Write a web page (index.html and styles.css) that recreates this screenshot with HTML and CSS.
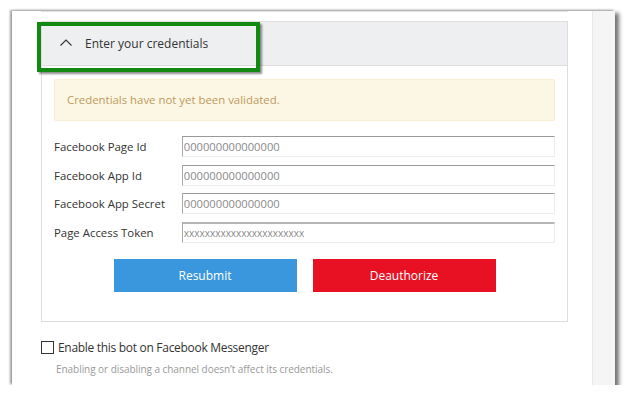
FILE: index.html
```html
<!DOCTYPE html>
<html lang="en">
<head>
  <meta charset="UTF-8" />
  <title>Facebook Messenger channel</title>
  <link rel="stylesheet" href="styles.css">
</head>
<body>

  <div class="shot">
    <div class="main">
      <div class="prev-card"></div>

      <div class="card">
        <div class="card-head">
          <svg class="chevron" width="12" height="7" viewBox="0 0 12 7">
            <path d="M0.5 6.5 L6 1 L11.5 6.5" fill="none" stroke="#333" stroke-width="1.1" />
          </svg>
          <span>Enter your credentials</span>
          <div class="highlight"></div>
        </div>

        <div class="card-body">
          <div class="alert">Credentials have not yet been validated.</div>

          <div class="form">
            <div class="row">
              <label for="pageId">Facebook Page Id</label>
              <input type="text" id="pageId" placeholder="000000000000000">
            </div>
            <div class="row">
              <label for="appId">Facebook App Id</label>
              <input type="text" id="appId" placeholder="000000000000000">
            </div>
            <div class="row">
              <label for="appSecret">Facebook App Secret</label>
              <input type="text" id="appSecret" placeholder="000000000000000">
            </div>
            <div class="row">
              <label for="token">Page Access Token</label>
              <input type="text" id="token" class="token" placeholder="xxxxxxxxxxxxxxxxxxxxxxx">
            </div>
          </div>

          <div class="buttons">
            <button class="btn blue">Resubmit</button>
            <button class="btn red">Deauthorize</button>
          </div>
        </div>
      </div>

      <label class="enable">
        <span class="box"></span>
        Enable this bot on Facebook Messenger
      </label>
      <p class="hint">Enabling or disabling a channel doesn’t affect its credentials.</p>
    </div>
    <div class="side"></div>
  </div>

</body>
</html>
```

FILE: styles.css
```css
body {
  margin: 0;
  background: #fff;
  font-family: 'Open Sans', sans-serif;
  color: #333;
}

.shot {
  display: flex;
  margin: 11px 0 0 12px;
  width: 603px;
  height: 374px;
  background: #fff;
  overflow: hidden;
  box-shadow: -2px -1px 2px rgba(0, 0, 0, 0.35),
              3px 3px 4px 1px rgba(0, 0, 0, 0.55);
}

.main {
  width: 581px;
  padding-left: 29px;
  box-sizing: border-box;
}

.side {
  width: 22px;
  background: #f5f5f5;
  border-left: 1px solid #e8e8e8;
}

.prev-card {
  width: 527px;
  height: 1px;
  box-sizing: border-box;
  border: 1px solid #e4e4e4;
  border-top: none;
}

/* Accordion card */
.card {
  width: 527px;
  margin-top: 9px;
  border: 1px solid #dedede;
  box-sizing: border-box;
}

.card-head {
  position: relative;
  display: flex;
  align-items: center;
  height: 43px;
  padding-left: 18px;
  background: #eeeff1;
  border-bottom: 1px solid #dedede;
  font-size: 12px;
}

.chevron {
  margin-right: 13px;
  margin-top: -2px;
}

.highlight {
  position: absolute;
  left: -5px;
  top: 0px;
  width: 215px;
  height: 42px;
  border: 4px solid #128a12;
  box-shadow: 2px 2px 2px rgba(0, 0, 0, 0.45);
}

.card-body {
  padding: 13px 12px 29px;
}

.alert {
  height: 40px;
  line-height: 40px;
  padding-left: 12px;
  background: #fcf6e4;
  border: 1px solid #f7eed3;
  border-radius: 2px;
  color: #c09a5e;
  font-size: 11.4px;
}

.form {
  margin-top: 15px;
}

.row {
  display: flex;
  align-items: center;
  height: 21px;
  margin-bottom: 7.5px;
}

.row label {
  width: 128px;
  font-size: 11.4px;
}

.row input {
  width: 374px;
  height: 21px;
  box-sizing: border-box;
  margin: 0;
  padding: 0 1px;
  border: 1px solid;
  border-color: #9a9a9a #ececec #ececec #a8a8a8;
  font-family: 'Open Sans', sans-serif;
  font-size: 11.2px;
}

.row input::placeholder {
  color: #8a8a8a;
}

.row input.token {
  border-top: 2px solid #b5b5b5;
  font-size: 10px;
}

.buttons {
  display: flex;
  justify-content: center;
  gap: 16px;
  margin-top: 16px;
}

.btn {
  width: 183px;
  height: 33px;
  border: none;
  color: #fff;
  font-family: 'Open Sans', sans-serif;
  font-size: 12px;
}

.blue {
  background-color: #3a96dd;
}

.red {
  background-color: #e81123;
}

/* Enable checkbox */
.enable {
  display: flex;
  align-items: center;
  margin-top: 17px;
  font-size: 12px;
  letter-spacing: -0.3px;
}

.box {
  width: 11px;
  height: 11px;
  border: 1px solid #333;
  margin-right: 4px;
}

.hint {
  margin: 6px 0 0 15px;
  font-size: 10px;
  letter-spacing: -0.05px;
  color: #999;
}
```
